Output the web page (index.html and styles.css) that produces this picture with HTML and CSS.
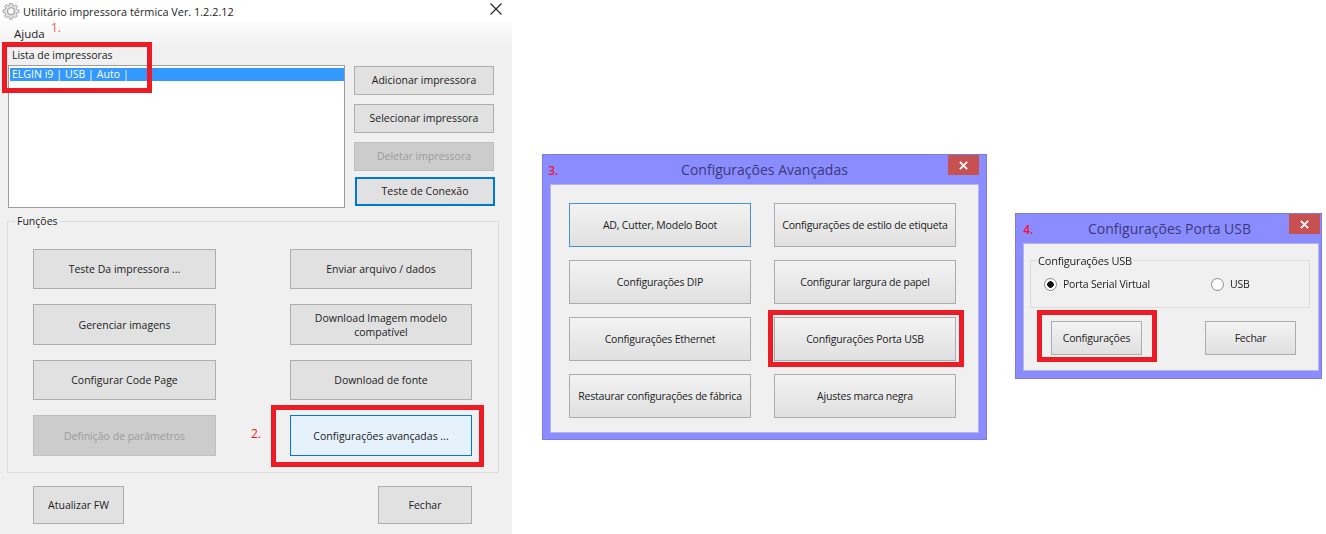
FILE: index.html
```html
<!DOCTYPE html>
<html lang="pt">
<head>
<meta charset="utf-8">
<title>Utilitário impressora térmica</title>
<link rel="stylesheet" href="styles.css">
</head>
<body>
<div class="desktop">
  <section class="window main">
    <header class="main-title">
      <svg class="gear" viewBox="0 0 20 20" width="18" height="18" aria-hidden="true">
        <path d="M8.6 1.5h2.8l.4 2.3 1.5.6 1.9-1.3 2 2-1.3 1.9.6 1.5 2.3.4v2.8l-2.3.4-.6 1.5 1.3 1.9-2 2-1.9-1.3-1.5.6-.4 2.3H8.6l-.4-2.3-1.5-.6-1.9 1.3-2-2 1.3-1.9-.6-1.5-2.3-.4V8.8l2.3-.4.6-1.5-1.3-1.9 2-2 1.9 1.3 1.5-.6z" fill="#e2e2e2" stroke="#a2a2a2" stroke-width="1"/>
        <circle cx="10" cy="10.2" r="3.8" fill="#f8f8f8" stroke="#a2a2a2" stroke-width="1.3"/>
      </svg>
      <span class="main-title-text">Utilitário impressora térmica Ver. 1.2.2.12</span>
      <svg class="close-x" viewBox="0 0 12 12" width="12" height="12" aria-hidden="true">
        <path d="M.5.5l11 11M11.5.5l-11 11" stroke="#222" stroke-width="1.1" fill="none"/>
      </svg>
    </header>
    <nav class="menu">Ajuda</nav>
    <div class="label">Lista de impressoras</div>
    <div class="printers">
      <div class="list"><div class="list-row">ELGIN i9 | USB | Auto |</div></div>
      <div class="side">
        <button class="btn side-btn">Adicionar impressora</button>
        <button class="btn side-btn">Selecionar impressora</button>
        <button class="btn side-btn disabled">Deletar impressora</button>
        <button class="btn side-btn focused">Teste de Conexão</button>
      </div>
    </div>
    <div class="group">
      <span class="legend">Funções</span>
      <div class="group-grid">
        <button class="btn">Teste Da impressora ...</button>
        <button class="btn">Enviar arquivo / dados</button>
        <button class="btn">Gerenciar imagens</button>
        <button class="btn">Download Imagem modelo<br>compatível</button>
        <button class="btn">Configurar Code Page</button>
        <button class="btn">Download de fonte</button>
        <button class="btn disabled">Definição de parâmetros</button>
        <button class="btn hot">Configurações avançadas ...</button>
      </div>
    </div>
    <div class="main-footer">
      <button class="btn fw">Atualizar FW</button>
      <button class="btn close-main">Fechar</button>
    </div>
  </section>

  <section class="window adv">
    <h2 class="dlg-title">Configurações Avançadas</h2>
    <div class="dlg-close">
      <svg viewBox="0 0 10 10" width="9" height="9" aria-hidden="true"><path d="M1 1l8 8M9 1l-8 8" stroke="#fff" stroke-width="2" fill="none"/></svg>
    </div>
    <div class="dlg-body adv-grid">
      <button class="btn8 first">AD, Cutter, Modelo Boot</button>
      <button class="btn8">Configurações de estilo de etiqueta</button>
      <button class="btn8">Configurações DIP</button>
      <button class="btn8">Configurar largura de papel</button>
      <button class="btn8">Configurações Ethernet</button>
      <button class="btn8">Configurações Porta USB</button>
      <button class="btn8">Restaurar configurações de fábrica</button>
      <button class="btn8">Ajustes marca negra</button>
    </div>
  </section>

  <section class="window usb">
    <h2 class="dlg-title">Configurações Porta USB</h2>
    <div class="dlg-close">
      <svg viewBox="0 0 10 10" width="9" height="9" aria-hidden="true"><path d="M1 1l8 8M9 1l-8 8" stroke="#fff" stroke-width="2" fill="none"/></svg>
    </div>
    <div class="dlg-body usb-body">
      <div class="usb-group">
        <span class="usb-legend">Configurações USB</span>
        <div class="radios">
          <label class="radio-item"><span class="radio on"></span>Porta Serial Virtual</label>
          <label class="radio-item"><span class="radio"></span>USB</label>
        </div>
      </div>
      <div class="usb-actions">
        <button class="btn8">Configurações</button>
        <button class="btn8">Fechar</button>
      </div>
    </div>
  </section>

  <div class="mark m1"></div>
  <div class="mark m2"></div>
  <div class="mark m3"></div>
  <div class="mark m4"></div>
  <span class="step s1">1.</span>
  <span class="step s2">2.</span>
  <span class="step s3">3.</span>
  <span class="step s4">4.</span>
</div>
</body>
</html>
```
FILE: styles.css
```css
* { box-sizing: border-box; }
html, body { margin: 0; background: #fff; }
body { font-family: "Open Sans", "Liberation Sans", sans-serif; color: #1c1c1c; }
.desktop { position: relative; width: 1326px; height: 534px; overflow: hidden; filter: blur(0.45px); }
.window { position: absolute; }
button { font-family: inherit; color: inherit; padding: 0; margin: 0; cursor: default; }

/* Main window */
.main { left: 0; top: 0; width: 512px; height: 534px; background: #f0f0f0; font-size: 10.5px; }
.main-title { height: 22px; background: #fff; display: flex; align-items: center; padding: 0 10px 0 2px; }
.gear { flex: none; }
.main-title-text { margin-left: 3px; font-size: 10.9px; flex: 1; white-space: nowrap; }
.close-x { flex: none; margin-top: -5px; }
.menu { height: 23px; padding: 4px 0 0 14px; font-size: 11.5px; background: linear-gradient(#fcfcfc, #f2f2f2); }
.label { height: 20px; padding: 3px 0 0 12px; letter-spacing: -0.02px; }
.printers { display: flex; gap: 9px; padding-left: 8px; }
.list { width: 337px; height: 143px; background: #fff; border: 1px solid #9c9c9c; padding: 2px 1px; }
.list-row { height: 13px; width: 334px; background: #3399ff; color: #fff; padding-left: 2px; line-height: 12px; white-space: nowrap; word-spacing: 0.2px; }
.side { display: flex; flex-direction: column; padding-top: 1px; }
.btn { background: #e1e1e1; border: 1px solid #adadad; font-size: 10.5px; line-height: 14px; text-align: center; }
.side-btn { width: 140px; height: 29px; margin-bottom: 9px; padding-bottom: 2px; }
.side-btn.focused { border: 2px solid #0078d7; margin: -3px 0 0 1px; }
.disabled { background: #cccccc; border-color: #bfbfbf; color: #9b9b9b; }
.hot { background: #e5f1fb; border-color: #0078d7; }
.group { position: relative; width: 492px; height: 252px; margin: 13px 0 0 7px; border: 1px solid #dcdcdc; padding: 27px 0 0 25px; }
.legend { position: absolute; left: 7px; top: -7px; padding: 0 2px; background: #f0f0f0; line-height: 13px; }
.group-grid { display: grid; grid-template-columns: 183px 182px; grid-template-rows: 40px 41px 40px 41px; gap: 15px 74px; }
.main-footer { display: flex; justify-content: space-between; padding: 13px 40px 0 33px; }
.fw { width: 91px; height: 38px; }
.close-main { width: 94px; height: 38px; }

/* Dialogs */
.adv, .usb { background: #8a8cff; }
.adv { left: 542px; top: 154px; width: 445px; height: 286px; border: 1px solid #7a7ce0; }
.usb { left: 1015px; top: 213px; width: 307px; height: 166px; border: 1px solid #7a7ce0; }
.dlg-title { margin: 0; font-weight: 400; text-align: center; color: #3a3a78; white-space: nowrap; }
.adv .dlg-title { height: 29px; font-size: 14px; line-height: 30px; }
.usb .dlg-title { height: 29px; font-size: 14px; line-height: 30px; padding-left: 2px; }
.dlg-close { position: absolute; top: 0; background: #c75050; height: 20px; width: 31px; display: flex; align-items: center; justify-content: center; }
.adv .dlg-close { right: 7px; }
.usb .dlg-close { right: 1px; }
.dlg-body { background: #f0f0f0; border: 1px solid #b4b5e6; margin: 0 7px; }
.btn8 { background: linear-gradient(#f3f3f3, #e0e0e0); border: 1px solid #acacac; font-size: 10.5px; letter-spacing: -0.2px; text-align: center; }
.adv-grid { height: 249px; display: grid; grid-template-columns: 182px 182px; grid-template-rows: repeat(4, 44px); gap: 13px 23px; padding: 18px 0 0 18px; }
.adv-grid .first { border-color: #4a93c9; }
.usb-body { height: 128px; margin-right: 2px; padding: 16px 8px 0 6px; }
.usb-group { position: relative; height: 48px; border: 1px solid #dcdcdc; }
.usb-legend { position: absolute; left: 6px; top: -7px; padding: 0 1px; background: #f0f0f0; font-size: 11px; line-height: 13px; letter-spacing: -0.2px; }
.radios { display: flex; padding: 17px 0 0 13px; font-size: 10.5px; letter-spacing: -0.2px; }
.radio-item { display: flex; align-items: center; gap: 6px; line-height: 13px; }
.radio-item:first-child { width: 167px; }
.radio { width: 13px; height: 13px; border: 1px solid #8a8a8a; border-radius: 50%; background: #fff; display: block; position: relative; }
.radio.on { background: radial-gradient(circle, #111 0 3px, #fff 3.6px); }
.usb-actions { display: flex; justify-content: space-between; padding: 13px 14px 0 21px; }
.usb-actions .btn8 { width: 91px; height: 34px; }

/* Annotations */
.mark { position: absolute; border: 5px solid #ed1c24; }
.m1 { left: 2px; top: 42px; width: 150px; height: 51px; }
.m2 { left: 271px; top: 405px; width: 213px; height: 62px; }
.m3 { left: 768px; top: 310px; width: 196px; height: 57px; }
.m4 { left: 1037px; top: 310px; width: 120px; height: 52px; }
.step { position: absolute; color: #ed1c24; font-size: 12px; line-height: 13px; }
.s1 { left: 51px; top: 21px; color: #ef5a60; }
.s2 { left: 251px; top: 427px; }
.s3 { left: 548px; top: 164px; color: #ff1030; font-weight: 600; }
.s4 { left: 1023px; top: 223px; color: #ff1030; font-weight: 600; }
```
